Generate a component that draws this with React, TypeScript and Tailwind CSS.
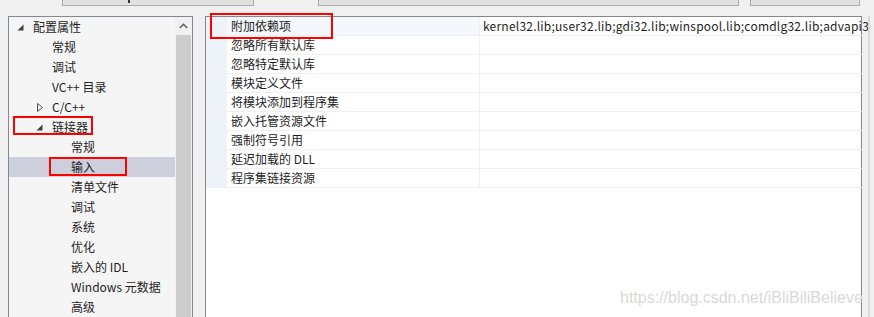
import React from "react";

type TreeItem = {
  label: string;
  level: number;
  arrow?: "open" | "closed";
  selected?: boolean;
};

const tree: TreeItem[] = [
  { label: "配置属性", level: 0, arrow: "open" },
  { label: "常规", level: 1 },
  { label: "调试", level: 1 },
  { label: "VC++ 目录", level: 1 },
  { label: "C/C++", level: 1, arrow: "closed" },
  { label: "链接器", level: 1, arrow: "open" },
  { label: "常规", level: 2 },
  { label: "输入", level: 2, selected: true },
  { label: "清单文件", level: 2 },
  { label: "调试", level: 2 },
  { label: "系统", level: 2 },
  { label: "优化", level: 2 },
  { label: "嵌入的 IDL", level: 2 },
  { label: "Windows 元数据", level: 2 },
  { label: "高级", level: 2 },
];

const props = [
  { name: "附加依赖项", value: "kernel32.lib;user32.lib;gdi32.lib;winspool.lib;comdlg32.lib;advapi3" },
  { name: "忽略所有默认库", value: "" },
  { name: "忽略特定默认库", value: "" },
  { name: "模块定义文件", value: "" },
  { name: "将模块添加到程序集", value: "" },
  { name: "嵌入托管资源文件", value: "" },
  { name: "强制符号引用", value: "" },
  { name: "延迟加载的 DLL", value: "" },
  { name: "程序集链接资源", value: "" },
];

const Arrow = ({ kind }: { kind: "open" | "closed" }) =>
  kind === "open" ? (
    <svg width="7" height="7" viewBox="0 0 7 7">
      <path d="M6.5 0.5 L6.5 6.5 L0.5 6.5 Z" fill="#404040" />
    </svg>
  ) : (
    <svg width="6" height="9" viewBox="0 0 6 9">
      <path d="M0.5 0.5 L5.5 4.5 L0.5 8.5 Z" fill="none" stroke="#505050" strokeWidth="1" />
    </svg>
  );

const TreeRow = ({ item }: { item: TreeItem }) => (
  <div
    className={`flex h-[20px] items-center ${item.selected ? "bg-[#cdcfdc]" : ""}`}
    style={{ paddingLeft: item.level * 19 }}
  >
    <div className="flex w-[24px] shrink-0 justify-end pr-[9px]">
      {item.arrow && <Arrow kind={item.arrow} />}
    </div>
    <span className="whitespace-nowrap">{item.label}</span>
  </div>
);

export default function App() {
  return (
    <div className="relative h-[317px] w-[874px] overflow-hidden bg-[#f0f0f0] text-[12px] leading-none text-[#1e1e1e] [font-family:'Noto_Sans_CJK_SC','Microsoft_YaHei',sans-serif]">
      {/* buttons cut off at top */}
      <div className="flex h-[16px] items-start">
        <div className="relative ml-[62px] h-[6px] w-[192px] border-x border-b border-[#adadad] bg-[#e1e1e1]">
          <div className="absolute left-[65px] top-0 h-[3px] w-[2px] bg-[#333]" />
        </div>
        <div className="ml-[64px] h-[6px] w-[421px] border-x border-b border-[#adadad] bg-[#e1e1e1]" />
        <div className="ml-[11px] h-[6px] w-[110px] border-x border-b border-[#adadad] bg-[#e1e1e1]" />
      </div>

      <div className="flex items-start">
        {/* left tree panel */}
        <div className="ml-[8px] flex h-[320px] w-[185px] border border-[#828790] bg-[#f5f5f5]">
          <div className="w-[166px] shrink-0">
            {tree.map((item, i) => (
              <TreeRow key={i} item={item} />
            ))}
          </div>
          <div className="flex w-[17px] flex-col bg-[#f0f0f0]">
            <div className="flex h-[18px] items-center justify-center">
              <svg width="9" height="6" viewBox="0 0 9 6">
                <path d="M0.8 5 L4.5 1.3 L8.2 5" fill="none" stroke="#606060" strokeWidth="1.6" />
              </svg>
            </div>
            <div className="ml-[1px] w-[15px] flex-1 bg-[#cdcdcd]" />
          </div>
        </div>

        {/* right property grid */}
        <div className="ml-[12px] flex h-[320px] w-[657px] border border-[#828790] bg-white">
          <div className="w-[21px] shrink-0">
            <div className="h-[171px] bg-[#eef3fa]" />
          </div>
          <div className="flex-1">
            {props.map((p, i) => (
              <div key={i} className="flex h-[19px] border-b border-[#f0f0f0]">
                <div className={`flex w-[253px] shrink-0 items-center border-r border-[#f0f0f0] pl-[4px] ${i === 0 ? "bg-[#f4f7fb]" : ""}`}>
                  <span className="whitespace-nowrap">{p.name}</span>
                </div>
                <div className="flex flex-1 items-center overflow-hidden pl-[3px]">
                  <span className="whitespace-nowrap tracking-[0.22px]">{p.value}</span>
                </div>
              </div>
            ))}
          </div>
        </div>

        <div className="ml-[6px] h-[320px] w-[2px] bg-[#d8d8d8]" />
      </div>

      {/* red highlight boxes */}
      <div className="absolute left-[13px] top-[116px] h-[19px] w-[80px] border-2 border-[#ff0000]" />
      <div className="absolute left-[49px] top-[157px] h-[19px] w-[78px] border-2 border-[#ff0000]" />
      <div className="absolute left-[210px] top-[13px] h-[26px] w-[123px] border-2 border-[#ff0000]" />

      {/* watermark */}
      <div className="absolute left-[620px] top-[290px] whitespace-nowrap text-[16px] leading-none text-[#d9d9d9] [font-family:'Liberation_Sans',Arial,sans-serif]">
        https://blog.csdn.net/iBliBiliBelieve
      </div>
    </div>
  );
}
